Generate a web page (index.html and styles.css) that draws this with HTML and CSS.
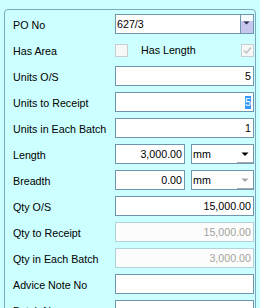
FILE: index.html
```html
<!DOCTYPE html>
<html lang="en">
<head>
  <meta charset="UTF-8">
  <title>Receipt Details</title>
  <link rel="stylesheet" href="styles.css">
</head>
<body>

  <div class="group">
    <div class="form">
      <span class="lbl">PO No</span>
      <div class="combo po">
        <span class="val">627/3</span>
        <span class="drop">
          <svg width="12" height="18" viewBox="0 0 12 18"><polygon points="2.5,6.5 8.5,6.5 5.5,9.5" fill="#2a2a4a"/></svg>
        </span>
      </div>

      <span class="lbl">Has Area</span>
      <div class="checks">
        <span class="chk"></span>
        <span class="lbl inline">Has Length</span>
        <span class="chk">
          <svg width="11" height="11" viewBox="0 0 11 11"><polyline points="2,5.5 4.3,8 9,2.5" fill="none" stroke="#c2c6c8" stroke-width="1.6"/></svg>
        </span>
      </div>

      <span class="lbl">Units O/S</span>
      <div class="box">5</div>

      <span class="lbl">Units to Receipt</span>
      <div class="box"><span class="sel">5</span></div>

      <span class="lbl">Units in Each Batch</span>
      <div class="box">1</div>

      <span class="lbl">Length</span>
      <div class="pair">
        <div class="box">3,000.00</div>
        <div class="combo unit">
          <span class="val">mm</span>
          <span class="drop">
            <svg width="16" height="18" viewBox="0 0 16 18"><polygon points="4.5,7.5 11.5,7.5 8,11" fill="#000"/></svg>
          </span>
        </div>
      </div>

      <span class="lbl">Breadth</span>
      <div class="pair">
        <div class="box">0.00</div>
        <div class="combo unit">
          <span class="val">mm</span>
          <span class="drop">
            <svg width="16" height="18" viewBox="0 0 16 18"><polygon points="4.5,7.5 11.5,7.5 8,11" fill="#a6a6a6"/></svg>
          </span>
        </div>
      </div>

      <span class="lbl">Qty O/S</span>
      <div class="box">15,000.00</div>

      <span class="lbl">Qty to Receipt</span>
      <div class="box off">15,000.00</div>

      <span class="lbl">Qty in Each Batch</span>
      <div class="box off">3,000.00</div>

      <span class="lbl">Advice Note No</span>
      <div class="box"></div>

      <span class="lbl">Batch No</span>
      <div class="box"></div>
    </div>
  </div>

</body>
</html>
```

FILE: styles.css
```css
body {
  margin: 0;
  height: 308px;
  overflow: hidden;
  background: #ccffff;
  font-family: 'Liberation Sans', Arial, sans-serif;
  font-size: 10.7px;
  color: #000;
}

.group {
  margin: 9px 4px 0;
  padding: 4px 1px 20px 8px;
  border: 1px solid #7ea8bc;
  border-radius: 4px;
}

.form {
  display: grid;
  grid-template-columns: 102px 139px;
  grid-auto-rows: 20px;
  row-gap: 6px;
  align-items: center;
}

.lbl {
  white-space: nowrap;
  padding-top: 2px;
}

.box {
  height: 20px;
  box-sizing: border-box;
  padding: 0 2px;
  border: 1px solid #7096ad;
  background: #fff;
  line-height: 18px;
  text-align: right;
  white-space: nowrap;
}

.box.off {
  border-color: #b2d2da;
  background: #fcfcfc;
  color: #a3a39b;
}

.sel {
  display: inline-block;
  line-height: 13px;
  background: #3399ff;
  color: #fff;
}

.combo {
  display: flex;
  height: 20px;
  box-sizing: border-box;
  border: 1px solid #7096ad;
  background: #fff;
  line-height: 18px;
}

.combo .val {
  flex: 1;
  padding-left: 1px;
}

.drop svg {
  display: block;
}

.po .drop {
  width: 12px;
  border-left: 1px solid #7096ad;
  background: linear-gradient(#f2fafd 0 6px, #c7c7ee 6px);
}

.unit .drop {
  width: 16px;
  border-bottom: 1px solid #a9a9a9;
  box-sizing: border-box;
}

.pair {
  display: flex;
  gap: 6px;
}

.pair .box {
  width: 70px;
}

.pair .combo {
  flex: 1;
}

.checks {
  display: flex;
  align-items: center;
}

.checks .inline {
  flex: 1;
  margin-left: 13px;
  padding-top: 0;
}

.chk {
  width: 13px;
  height: 13px;
  box-sizing: border-box;
  padding: 0;
  border: 1px solid #c6ced1;
  background: #f6f8f8;
}

.chk svg {
  display: block;
}
```
